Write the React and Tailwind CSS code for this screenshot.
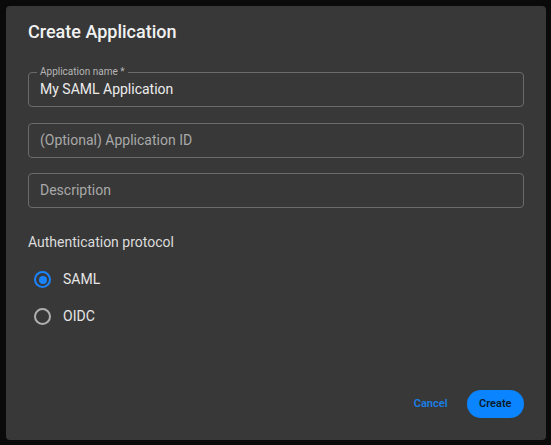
import React, { useState } from "react";

const font = { fontFamily: "Roboto, 'Noto Sans', sans-serif" };

const Field = ({ label, value, placeholder }) => (
  <div className="relative h-[35px] rounded-[4px] border border-[#6b6b6b] flex items-center px-[11px]">
    {label && (
      <span className="absolute -top-[7px] left-[8px] px-[3px] bg-[#383838] text-[10px] leading-[12px] text-[#b5b5b5]">
        {label}
      </span>
    )}
    {value ? (
      <span className="text-[14px] text-[#ececec]">{value}</span>
    ) : (
      <span className="text-[14px] text-[#a8a8a8]">{placeholder}</span>
    )}
  </div>
);

const Radio = ({ checked, label, onClick }) => (
  <button onClick={onClick} className="h-[37px] flex items-center gap-[12px] pl-[6px]">
    <span
      className={
        "w-[17px] h-[17px] rounded-full border-2 flex items-center justify-center " +
        (checked ? "border-[#1a84ff]" : "border-[#b0b0b0]")
      }
    >
      {checked && <span className="w-[8px] h-[8px] rounded-full bg-[#1a84ff]" />}
    </span>
    <span className="text-[14px] text-[#e6e6e6]">{label}</span>
  </button>
);

export default function App() {
  const [protocol, setProtocol] = useState("saml");
  return (
    <div className="w-[551px] h-[445px] bg-[#0a0a0a] pt-[6px] pl-[6px]" style={font}>
      <div className="w-[540px] h-[434px] rounded-[4px] bg-[#383838] flex flex-col px-[22px] pb-[22px]">
        <h2 className="pt-[14px] text-[18px] leading-[24px] font-medium text-[#f2f2f2]">
          Create Application
        </h2>
        <div className="mt-[28px] flex flex-col gap-[15.5px]">
          <Field label="Application name *" value="My SAML Application" />
          <Field placeholder="(Optional) Application ID" />
          <Field placeholder="Description" />
        </div>
        <p className="mt-[24px] text-[14px] leading-[20px] text-[#dcdcdc]">Authentication protocol</p>
        <div className="mt-[9px] flex flex-col items-start">
          <Radio checked={protocol === "saml"} label="SAML" onClick={() => setProtocol("saml")} />
          <Radio checked={protocol === "oidc"} label="OIDC" onClick={() => setProtocol("oidc")} />
        </div>
        <div className="mt-auto flex justify-end items-center gap-[19px]">
          <button className="text-[11px] font-semibold text-[#1a80e6]">Cancel</button>
          <button className="h-[28px] px-[12.5px] rounded-full bg-[#0a84ff] text-[11px] font-semibold text-[#0b1a2b]">
            Create
          </button>
        </div>
      </div>
    </div>
  );
}
